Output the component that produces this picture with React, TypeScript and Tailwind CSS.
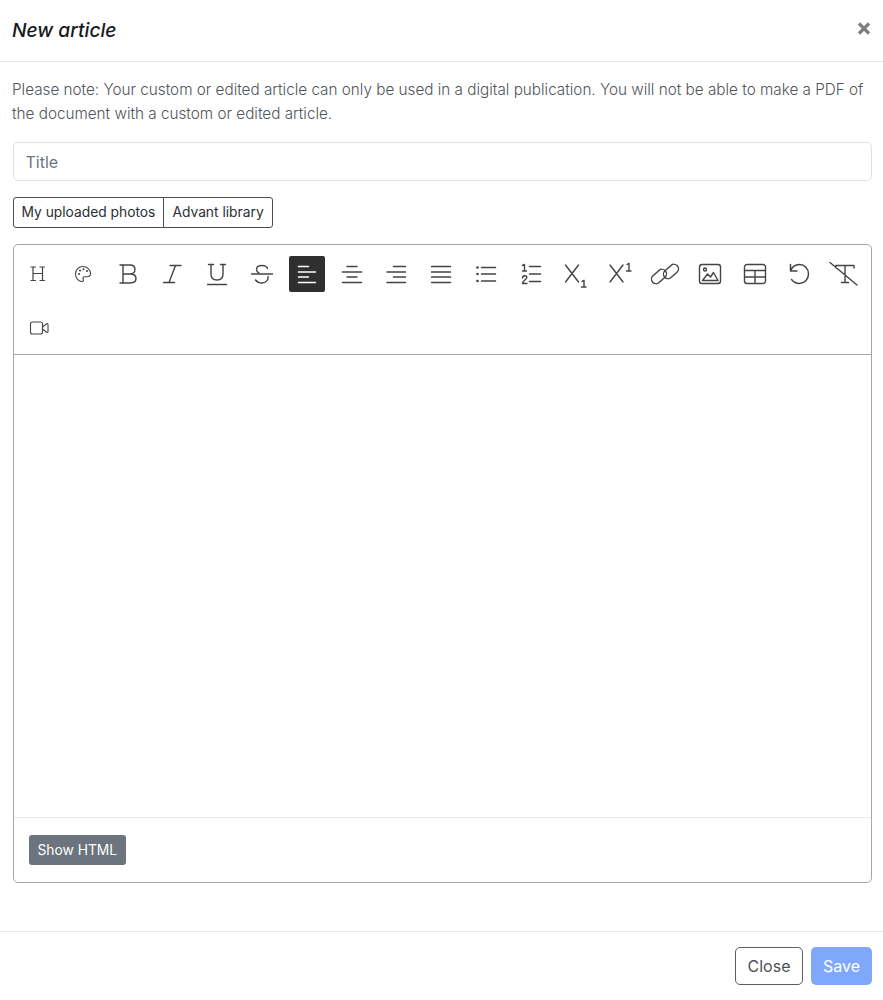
import React from 'react';

const stroke = {
  fill: 'none',
  stroke: 'currentColor',
  strokeWidth: 1.5,
  strokeLinecap: 'round' as const,
  strokeLinejoin: 'round' as const,
};

// toolbar icons, each in a 26x26 box centred on the button
const icons: { name: string; body: React.ReactNode }[] = [
  {
    name: 'heading',
    body: (
      <path d="M6 6h4.500M15 6h4.500M6 19.500h4.500M15 19.500h4.500M8 6v13.500M17.500 6v13.500M8 12.500h9.500" strokeWidth={1.200} />
    ),
  },
  {
    name: 'palette',
    body: (
      <g strokeWidth={1.100}>
        <path d="M13 5.500c-4.300 0-7.500 3.300-7.500 7.500s3.300 7.500 6.500 7.500c1.500 0 1.700-1.100 1.200-2-.7-1.200-.2-2.700 1.500-2.700h2.300c2.200 0 3.500-1.300 3.500-3.200 0-4-3.400-7.100-7.500-7.100z" />
        <circle cx="9" cy="13" r=".5" />
        <circle cx="10" cy="9.500" r=".5" />
        <circle cx="13.500" cy="8.300" r=".5" />
        <circle cx="17" cy="10" r=".5" />
      </g>
    ),
  },
  {
    name: 'bold',
    body: <path d="M5 4h3M5 22h3M8 4v18M8 4h7c3 0 5 1.800 5 4.500S18 13 15 13H8M15 13c3.500 0 6 1.800 6 4.500S18.500 22 15 22H8" strokeWidth={1.400} />,
  },
  {
    name: 'italic',
    body: <path d="M11 4.500h11M4.500 21.500h11M16.500 4.500l-6.500 17" strokeWidth={1.400} />,
  },
  {
    name: 'underline',
    body: <path d="M4.500 3.500h5M16.500 3.500h5M7 3.500V13c0 4 2.500 6 6 6s6-2 6-6V3.500M3.500 23.500h19" strokeWidth={1.400} />,
  },
  {
    name: 'strike',
    body: (
      <g strokeWidth={1.400}>
        <path d="M2.500 13h21" />
        <path d="M18.500 7.500C18 5.800 16 4.500 13 4.500 9.500 4.500 7.500 6.300 7.500 8.500c0 1.500 1 2.800 2.500 3.500" />
        <path d="M19 15.500c.8 3-2 6.500-6 6.500-3 0-5-1.100-6.500-3" />
      </g>
    ),
  },
  {
    name: 'left',
    body: <path d="M4.500 5.500h10M4.500 11h17M4.500 16h10M4.500 21.500h17" stroke="#ffffff" strokeWidth={1.600} />,
  },
  {
    name: 'center',
    body: <path d="M8 5.500h10M3.500 11h19M8 16h10M3.500 21.500h19" />,
  },
  {
    name: 'right',
    body: <path d="M10.500 5.500h12M4 11h18.500M10.500 16h12M4 21.500h18.500" />,
  },
  {
    name: 'justify',
    body: <path d="M3.500 5.500h19M3.500 11h19M3.500 16h19M3.500 21.500h19" />,
  },
  {
    name: 'bullets',
    body: (
      <g>
        <path d="M8.500 6.500h14M8.500 13h14M8.500 20h14" />
        <circle cx="4.500" cy="6.500" r="1.300" fill="currentColor" stroke="none" />
        <circle cx="4.500" cy="13" r="1.300" fill="currentColor" stroke="none" />
        <circle cx="4.500" cy="20" r="1.300" fill="currentColor" stroke="none" />
      </g>
    ),
  },
  {
    name: 'numbers',
    body: (
      <g>
        <path d="M11.500 5.500h11M11.500 13h11M11.500 20.500h11" />
        <path d="M4.500 4.500 6.500 3.500v6.500M4.500 10h4" strokeWidth={1.400} />
        <path d="M4.500 17c0-3 4.300-3 4.300-.5 0 1.800-4.300 3.500-4.300 6h4.500" strokeWidth={1.400} />
      </g>
    ),
  },
  {
    name: 'sub',
    body: <path d="M2.500 4 15.500 21M15.500 4 2.500 21M19 20.500l2-1.200V26M18.500 26h4.500" strokeWidth={1.400} />,
  },
  {
    name: 'sup',
    body: <path d="M3 4 16 21M16 4 3 21M20 3.500l2-1.200V10M19.500 10h4.500" strokeWidth={1.400} />,
  },
  {
    name: 'link',
    body: (
      <g strokeWidth={1.400}>
        <rect x="-1.500" y="11" width="17" height="9" rx="4.500" transform="rotate(-42 7 15.500)" />
        <rect x="10.500" y="6" width="17" height="9" rx="4.500" transform="rotate(-42 19 10.500)" />
      </g>
    ),
  },
  {
    name: 'image',
    body: (
      <g strokeWidth={1.400}>
        <rect x="2.500" y="3.500" width="21" height="19" rx="2.500" />
        <circle cx="8" cy="8.500" r="1.500" />
        <path d="M5.500 19.500 10.500 13l3 3 3-4.500 4.500 8z" />
      </g>
    ),
  },
  {
    name: 'table',
    body: <path d="M5 3.500h16a2.500 2.500 0 0 1 2.500 2.500v14a2.500 2.500 0 0 1-2.500 2.500H5A2.500 2.500 0 0 1 2.500 20V6A2.500 2.500 0 0 1 5 3.500zM2.500 9.500h21M2.500 16h21M13 9.500v13" strokeWidth={1.400} />,
  },
  {
    name: 'undo',
    body: <path d="M3.500 3.500v6.500H10M3.500 10C5 6 8.500 3.500 12.500 3.500c5 0 9 4 9 9.500s-4 9.500-9 9.500c-3.500 0-6-1.500-8-4" strokeWidth={1.500} />,
  },
  {
    name: 'clear',
    body: <path d="M-1 1.500 26 24M5 7V4.500h18V7M14 4.500v17M10.500 21.500h7" strokeWidth={1.400} />,
  },
  {
    name: 'video',
    body: (
      <g strokeWidth={1.100}>
        <rect x="5.500" y="7" width="12" height="12" rx="2" />
        <path d="M17.500 12l4.200-3.300c.6-.4 1.300 0 1.300.6v7.400c0 .6-.7 1-1.300.6L17.500 14z" />
      </g>
    ),
  },
];

function ToolButton({ name, body }: { name: string; body: React.ReactNode }) {
  const active = name === 'left';
  return (
    <button
      type="button"
      title={name}
      className={`flex h-9 w-9 items-center justify-center rounded-[2px] ${
        active ? 'bg-[#2f2f2f]' : 'text-[#444444]'
      }`}
    >
      <svg width="26" height="26" viewBox="0 0 26 26" className="overflow-visible" {...stroke}>
        {body}
      </svg>
    </button>
  );
}

export default function App() {
  return (
    <div className="flex h-[1000px] w-[883px] flex-col bg-white font-['Inter',sans-serif] text-[#212529]">
      <div className="flex h-[62px] shrink-0 items-center justify-between border-b border-[#e4e6e8] pl-3 pr-3">
        <h1 className="text-[19.200px] font-medium italic leading-none text-[#17191c]">New article</h1>
        <svg width="14" height="13" viewBox="0 0 14 13" className="mt-[-4px] text-[#7d7d7d]">
          <path d="M2 1.500l10 10M12 1.500l-10 10" stroke="currentColor" strokeWidth="3.200" />
        </svg>
      </div>

      <div className="flex flex-1 flex-col pl-[12.500px] pr-[11px] pt-4">
        <p className="mb-4 ml-[-0.5px] text-[15.280px] font-light leading-6 text-[#50555a]">
          Please note: Your custom or edited article can only be used in a digital publication. You will not be able to make a PDF of the document with a custom or edited article.
        </p>

        <input
          placeholder="Title"
          className="mb-4 h-[39px] w-full rounded-[5px] border border-[#dee2e6] px-3 text-[16px] placeholder:text-[#6c757d]"
        />

        <div className="mb-4 flex">
          <button type="button" className="h-[31px] rounded-l-[3px] border border-[#4a4f54] px-2 text-[13.800px] text-[#2b2f33]">
            My uploaded photos
          </button>
          <button type="button" className="ml-[-1px] h-[31px] rounded-r-[3px] border border-[#4a4f54] px-2 text-[13.800px] text-[#2b2f33]">
            Advant library
          </button>
        </div>

        <div className="flex h-[639px] flex-col rounded-[5px] border border-[#a6a6a6]">
          <div className="flex h-[110px] shrink-0 flex-wrap content-start gap-x-[8.800px] gap-y-[18px] border-b border-[#a6a6a6] pl-[6.500px] pt-[11px]">
            {icons.map((icon) => (
              <ToolButton key={icon.name} name={icon.name} body={icon.body} />
            ))}
          </div>
          <div className="flex-1" />
          <div className="flex h-[65px] shrink-0 items-center border-t border-[#e9eaec] pl-[15px]">
            <button type="button" className="h-[30px] rounded-[3px] bg-[#6c757d] px-[9px] text-[13.800px] text-white">
              Show HTML
            </button>
          </div>
        </div>
      </div>

      <div className="flex h-[69px] shrink-0 justify-end gap-2 border-t border-[#e9eaec] pr-[11px] pt-[15px]">
        <button type="button" className="h-[38px] w-[68px] rounded-[5px] border border-[#5c6166] text-[16px] text-[#4b5056]">
          Close
        </button>
        <button type="button" className="h-[38px] w-[61px] rounded-[5px] bg-[#7fa8fb] text-[16px] text-white">
          Save
        </button>
      </div>
    </div>
  );
}
